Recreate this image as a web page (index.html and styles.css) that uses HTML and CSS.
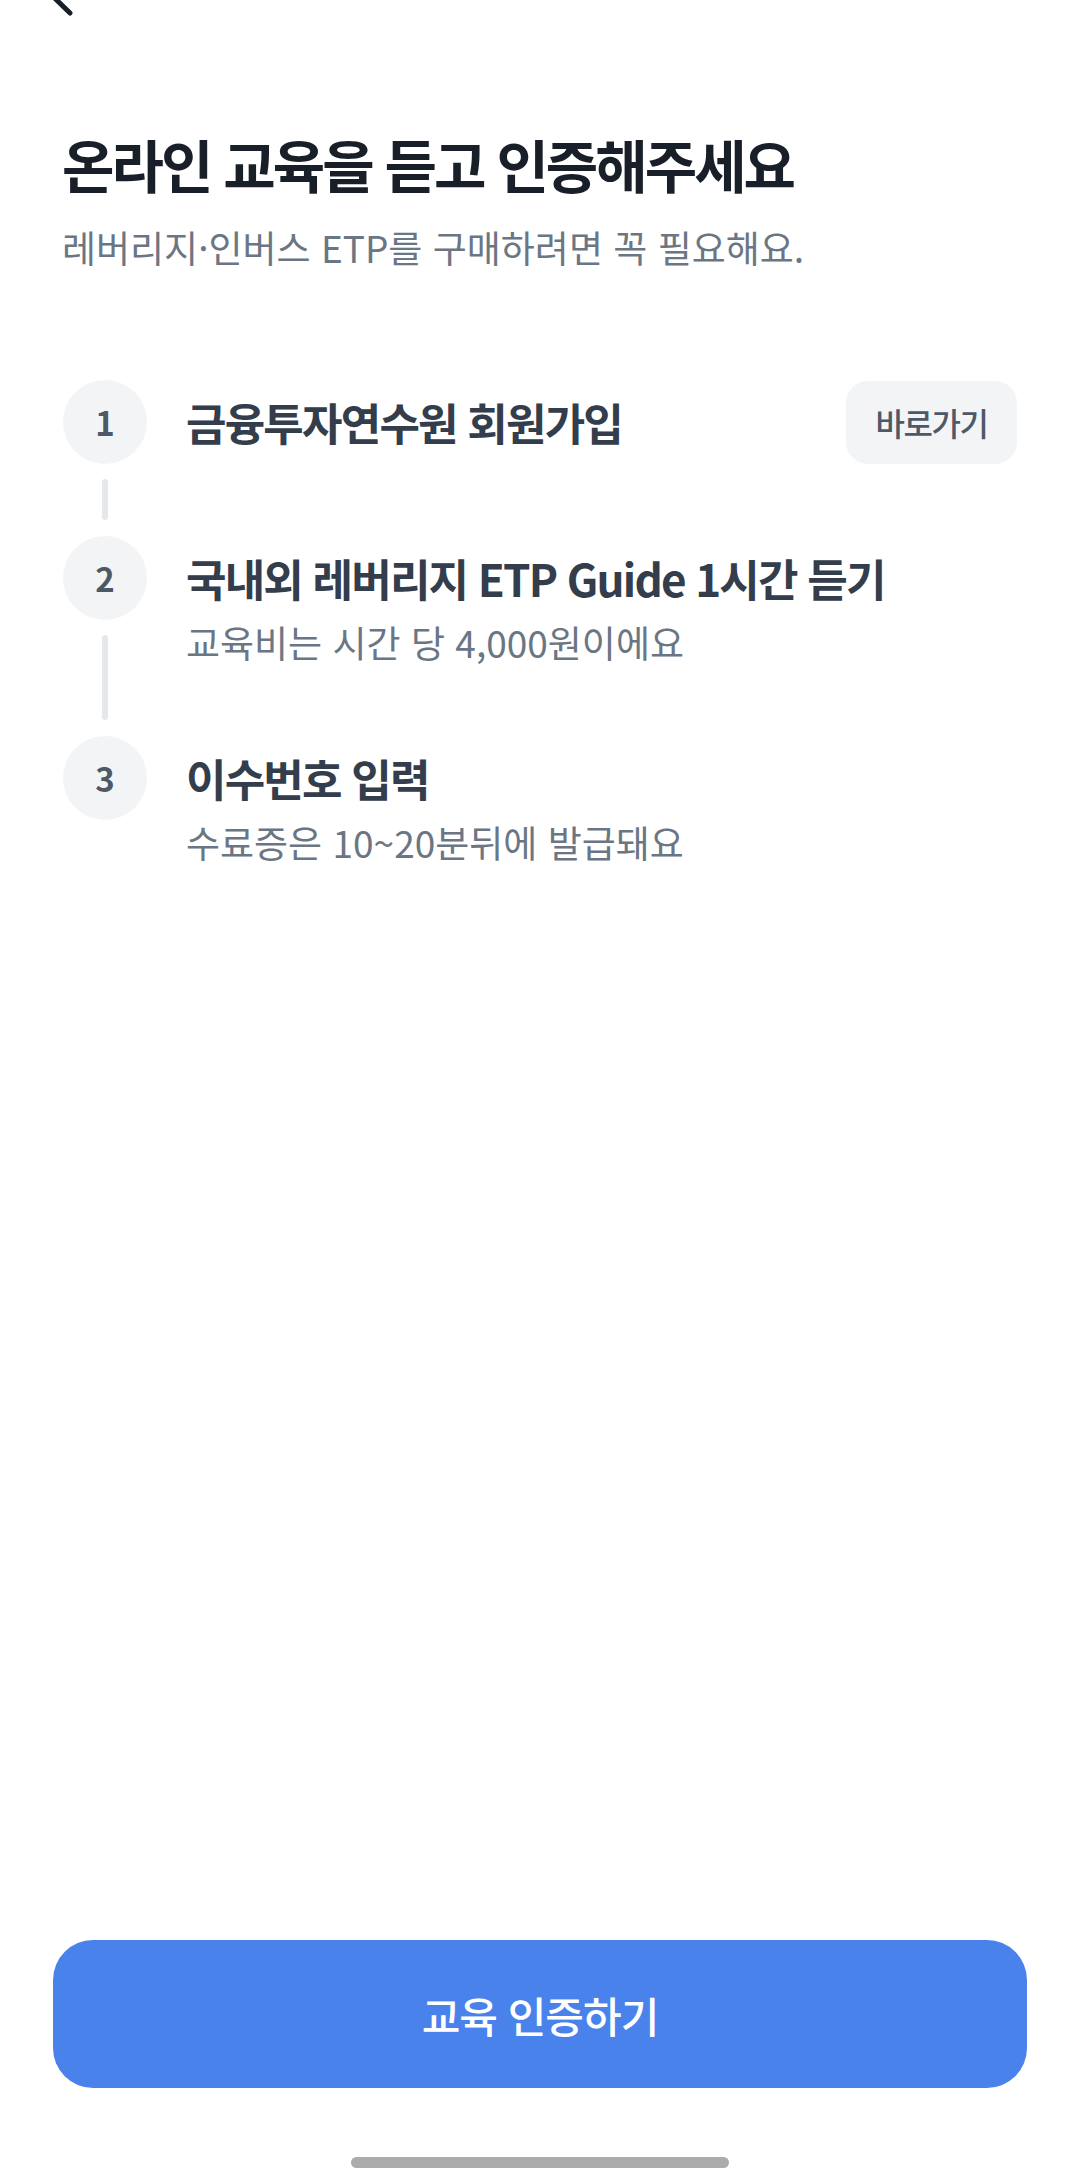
FILE: index.html
```html
<!DOCTYPE html>
<html lang="ko">

<head>
    <meta charset="UTF-8">
    <meta name="viewport" content="width=device-width, initial-scale=1.0">
    <title>교육 인증</title>
    <link rel="stylesheet" href="styles.css">
</head>

<body>
    <div class="page">
        <div class="topbar">
            <svg class="back-btn" width="120" height="30" viewBox="0 0 120 30">
                <polyline points="70,-54 36,-20 70,13" fill="none" stroke="#191f28" stroke-width="5" stroke-linecap="round" stroke-linejoin="round" />
            </svg>
        </div>

        <div class="intro">
            <h1 class="title">온라인 교육을 듣고 인증해주세요</h1>
            <p class="subtitle">레버리지·인버스 ETP를 구매하려면 꼭 필요해요.</p>
        </div>

        <ol class="steps">
            <li class="step">
                <div class="step-side">
                    <span class="step-num">1</span>
                    <span class="step-line"></span>
                </div>
                <div class="step-body">
                    <div class="step-head">
                        <p class="step-title">금융투자연수원 회원가입</p>
                        <button class="link-btn">바로가기</button>
                    </div>
                </div>
            </li>
            <li class="step">
                <div class="step-side">
                    <span class="step-num">2</span>
                    <span class="step-line"></span>
                </div>
                <div class="step-body">
                    <p class="step-title">국내외 레버리지 ETP Guide 1시간 듣기</p>
                    <p class="step-desc">교육비는 시간 당 4,000원이에요</p>
                </div>
            </li>
            <li class="step">
                <div class="step-side">
                    <span class="step-num">3</span>
                </div>
                <div class="step-body">
                    <p class="step-title">이수번호 입력</p>
                    <p class="step-desc">수료증은 10~20분뒤에 발급돼요</p>
                </div>
            </li>
        </ol>

        <div class="footer">
            <button class="main-btn">교육 인증하기</button>
            <div class="home-bar"></div>
        </div>
    </div>
</body>

</html>
```

FILE: styles.css
```css
* {
    margin: 0;
    padding: 0;
    box-sizing: border-box;
}

body {
    background-color: white;
    font-family: "Noto Sans CJK KR", "Noto Sans", sans-serif;
    color: #191f28;
}

.page {
    width: 100%;
    height: 100vh;
    display: flex;
    flex-direction: column;
}

.topbar {
    height: 20px;
    overflow: hidden;
}

.back-btn {
    display: block;
}

.intro {
    padding: 0 62px;
}

.title {
    margin-top: 108px;
    font-size: 57px;
    line-height: 70px;
    font-weight: 700;
    letter-spacing: -3px;
    color: #191f28;
}

.subtitle {
    margin-top: 25px;
    font-size: 37px;
    line-height: 48px;
    color: #6b7684;
}

.steps {
    list-style: none;
    margin-top: 109px;
    padding: 0 63px 0 63px;
}

.step {
    display: flex;
    gap: 39px;
    padding-bottom: 72px;
}

.step:last-child {
    padding-bottom: 0;
}

.step-side {
    width: 84px;
    display: flex;
    flex-direction: column;
    align-items: center;
    flex-shrink: 0;
    margin-bottom: -72px;
}

.step:last-child .step-side {
    margin-bottom: 0;
}

.step-num {
    width: 84px;
    height: 84px;
    border-radius: 50%;
    background-color: #f2f4f6;
    color: #4e5968;
    font-size: 33px;
    font-weight: 600;
    display: flex;
    align-items: center;
    justify-content: center;
}

.step-line {
    flex: 1;
    width: 6px;
    border-radius: 3px;
    background-color: #e5e8eb;
    margin: 15px 0 16px;
}

.step-body {
    flex: 1;
}

.step-head {
    display: flex;
    align-items: center;
    justify-content: space-between;
}

.step-title {
    font-size: 44px;
    line-height: 84px;
    font-weight: 700;
    letter-spacing: -1.8px;
    color: #333d4b;
}

.step-desc {
    font-size: 37px;
    line-height: 44px;
    color: #6b7684;
}

.link-btn {
    width: 171px;
    height: 83px;
    border: none;
    border-radius: 22px;
    background-color: #f2f4f6;
    color: #4e5968;
    font-family: inherit;
    font-size: 32px;
    font-weight: 500;
    letter-spacing: -1.5px;
}

.footer {
    margin-top: auto;
    padding: 0 53px;
    display: flex;
    flex-direction: column;
    align-items: center;
}

.main-btn {
    width: 100%;
    height: 148px;
    border: none;
    border-radius: 40px;
    background-color: #4a82eb;
    color: white;
    font-family: inherit;
    font-size: 42px;
    font-weight: 500;
    letter-spacing: -1px;
}

.home-bar {
    width: 378px;
    height: 11px;
    border-radius: 6px;
    background-color: #acacac;
    margin: 69px 0 10px;
}
```
